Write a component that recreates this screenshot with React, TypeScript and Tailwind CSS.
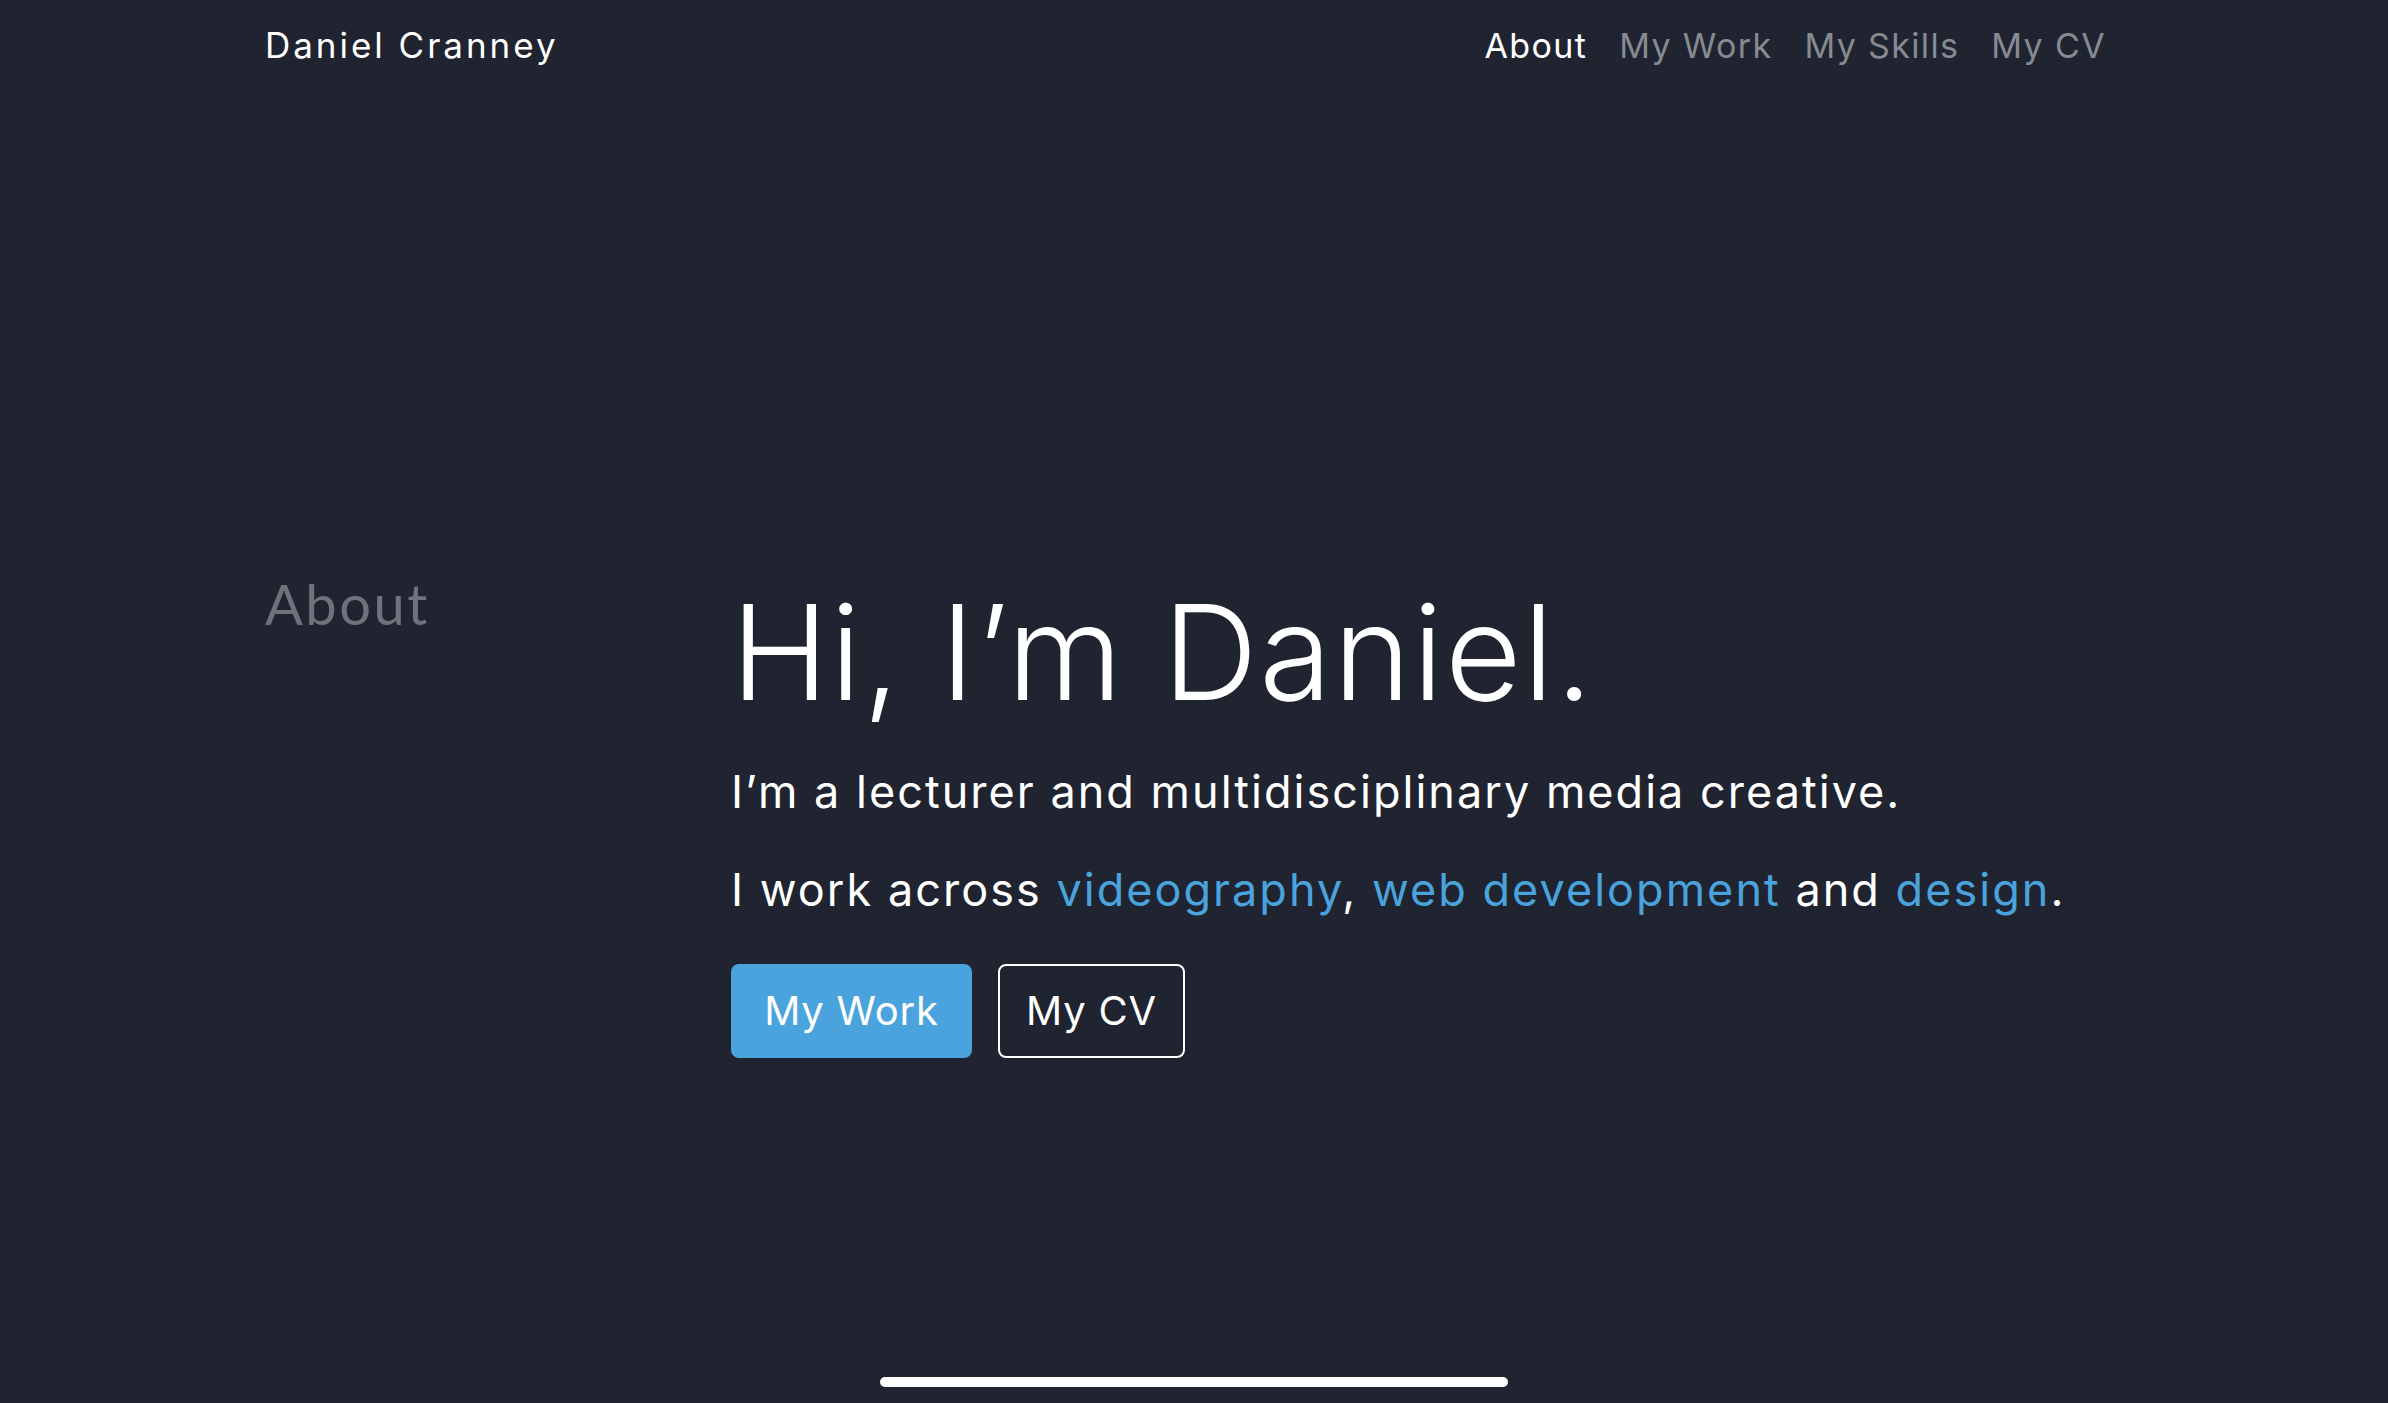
export default function App() {
  const navItems = ['About', 'My Work', 'My Skills', 'My CV'];

  return (
    <div className="min-h-[1403px] w-full bg-[#1f2430] text-white font-['Inter',sans-serif] flex flex-col">
      <header className="h-[90px] flex items-center justify-between pl-[265px] pr-[282px]">
        <span className="text-[35px] tracking-[0.085em]">Daniel Cranney</span>
        <nav className="flex items-center gap-[32px] text-[34px] tracking-[0.04em]">
          {navItems.map((item, i) => (
            <a key={item} className={i === 0 ? 'text-white' : 'text-[#878a92]'}>
              {item}
            </a>
          ))}
        </nav>
      </header>

      <main className="flex-1 flex pl-[265px] pt-[496px]">
        <h2 className="w-[466px] shrink-0 text-[56px] leading-none tracking-[0.045em] text-[#6f727a] font-['Lato',sans-serif] -mt-[10px]">
          About
        </h2>
        <section className="flex flex-col">
          <h1 className="text-[132px] font-light leading-none tracking-[0.012em]">
            Hi, I’m Daniel.
          </h1>
          <p className="mt-[46px] text-[45px] leading-tight tracking-[0.045em]">
            I’m a lecturer and multidisciplinary media creative.
          </p>
          <p className="mt-[42px] text-[45px] leading-tight tracking-[0.045em]">
            I work across <span className="text-[#4aa3dc]">videography</span>,{' '}
            <span className="text-[#4aa3dc]">web development</span> and{' '}
            <span className="text-[#4aa3dc]">design</span>.
          </p>
          <div className="mt-[45px] flex gap-[26px]">
            <button className="h-[94px] w-[241px] rounded-[8px] bg-[#4aa3dc] text-[40px] tracking-[0.02em] text-white">
              My Work
            </button>
            <button className="h-[94px] w-[187px] rounded-[8px] border-2 border-white text-[40px] tracking-[0.02em] text-white">
              My CV
            </button>
          </div>
        </section>
      </main>

      <div className="flex justify-center pb-[16px]">
        <div className="h-[10px] w-[628px] rounded-full bg-white" />
      </div>
    </div>
  );
}
